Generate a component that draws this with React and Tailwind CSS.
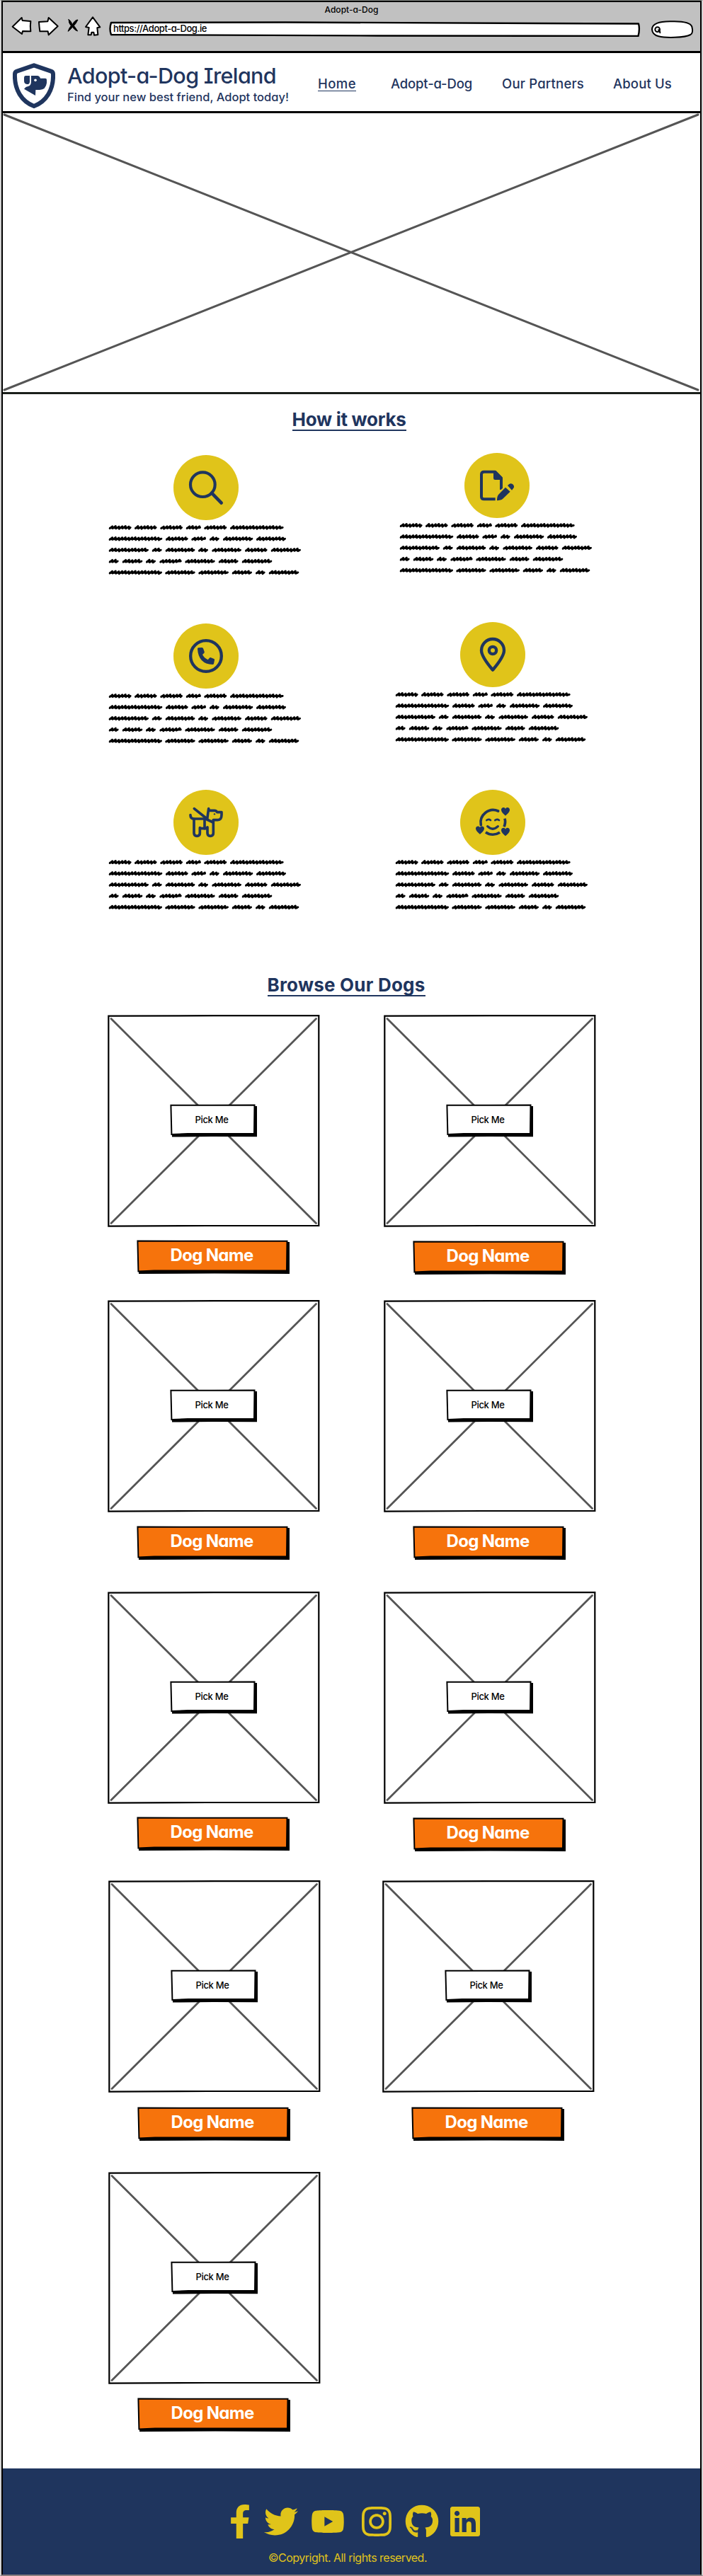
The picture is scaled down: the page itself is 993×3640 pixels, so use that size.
import { useLayoutEffect, useRef } from "react";
import { FaFacebookF, FaTwitter, FaYoutube, FaInstagram, FaGithub, FaLinkedin } from "react-icons/fa";

// Spreads the letters of a label so that it fills the given width.
function Label({ width, className, children }) {
  const ref = useRef(null);
  useLayoutEffect(() => {
    const el = ref.current;
    const fit = () => {
      el.style.letterSpacing = "0px";
      const natural = el.getBoundingClientRect().width;
      el.style.letterSpacing = (width - natural) / el.textContent.length + "px";
    };
    fit();
    document.fonts?.ready.then(fit);
  }, [width]);
  return (
    <span ref={ref} className={"inline-block whitespace-nowrap " + className}>
      {children}
    </span>
  );
}

function ChromeIcons() {
  return (
    <svg className="h-[30px] w-[128px]" viewBox="45 66 384 90" fill="#fff" stroke="#000" strokeWidth="6" strokeLinejoin="round" strokeLinecap="round">
      <path d="M50 113 L89 75 L92 87 L127 90 Q124 112 127 133 L93 132 L90 144 Z" />
      <path d="M162 93 L199 91 L203 75 L242 111 L203 148 L200 133 L166 133 Q163 112 162 93 Z" />
      <path d="M288 83 C296 86 301 98 304 104 C310 92 318 84 327 84 Q317 103 310 109 Q318 119 326 132 Q316 131 304 115 Q294 128 285 133 Q290 119 298 109 Q288 99 288 83 Z" fill="#000" strokeWidth="3" />
      <path d="M390 73 L421 115 L409 118 L412 147 L396 149 L394 137 L385 137 L383 148 L370 148 L374 117 L360 114 Z" />
    </svg>
  );
}

function BrowserBar() {
  return (
    <div className="flex h-[72px] flex-col border-b-[3px] border-black bg-[#c1c1c1]">
      <div className="flex h-[19px] justify-center">
        <Label width={76} className="text-xs font-medium leading-[22px]">Adopt-a-Dog</Label>
      </div>
      <div className="flex pl-3">
        <ChromeIcons />
        <div className="ml-[9px] mt-[8px] grid h-[22px] w-[753px] items-center">
          <svg className="col-start-1 row-start-1 h-[22px] w-[753px]" viewBox="0 0 753 22" fill="#fff" stroke="#000" strokeWidth="2.4" strokeLinejoin="round">
            <path d="M4 2 L250 1.5 L749 3.5 Q751 11 748.5 21 L380 20.5 L4 19 Q1 11 4 2 Z" />
          </svg>
          <div className="col-start-1 row-start-1 flex pb-0.5 pl-[7px]">
            <Label width={132} className="text-[13px] font-medium leading-5">https://Adopt-a-Dog.ie</Label>
          </div>
        </div>
        <svg className="ml-[12px] mt-[5px] h-[28px] w-[64px]" viewBox="1275 80 192 84" fill="#fff" stroke="#000" strokeWidth="6" strokeLinecap="round">
          <path d="M1284 124 C1284 98 1314 91 1360 90 C1410 88 1446 92 1453 112 Q1460 138 1447 146 C1420 160 1340 160 1312 153 Q1285 146 1284 124 Z" />
          <circle cx="1307" cy="124" r="10" />
          <path d="M1311 126 Q1318 129 1318 138" />
        </svg>
      </div>
    </div>
  );
}

function Logo() {
  return (
    <svg className="h-16 w-[60px]" viewBox="54 267 180 192" fill="#1f355e">
      <path
        d="M144 277 L216 302 Q225 305 225 314 C228 380 196 430 144 450 C92 430 60 380 63 314 Q63 305 72 302 Z"
        fill="none" stroke="#1f355e" strokeWidth="18" strokeLinejoin="round"
      />
      <path d="M108 321 H126 V347 Q125 358 114 357 Q102 356 102 343 V329 Q102 321 108 321 Z" />
      <path d="M132 321 H158 Q167 321 171 332 H192 Q198 332 198 339 V352 Q194 381 168 381 H151 L150 405 L102 377 Q109 367 119 366 Q132 363 132 345 Z" />
      <circle cx="150" cy="340" r="5.5" fill="#fff" />
    </svg>
  );
}

function Header() {
  return (
    <header className="flex h-[82px] text-[#1f355e]">
      <div className="pl-[14px] pt-[14px]">
        <Logo />
      </div>
      <div className="flex w-[352px] flex-col items-start pl-[17px] pt-[13px]">
        <Label width={295} className="h-[38px] text-[30.5px] font-medium leading-[38px]">Adopt-a-Dog Ireland</Label>
        <Label width={313} className="h-[22px] text-[16.5px] font-medium leading-[22px]">Find your new best friend, Adopt today!</Label>
      </div>
      <nav className="flex pl-[19px] pt-[29px] text-[18.5px] font-medium leading-7">
        <a className="flex h-[25px] w-[54px] border-b border-[#1f355e]"><Label width={54} className="">Home</Label></a>
        <a className="ml-[49px]"><Label width={115} className="">Adopt-a-Dog</Label></a>
        <a className="ml-[42px]"><Label width={116} className="">Our Partners</Label></a>
        <a className="ml-[41px]"><Label width={83} className="">About Us</Label></a>
      </nav>
    </header>
  );
}

function Hero() {
  return (
    <svg className="h-[400px] w-full" viewBox="0 0 985 400" fill="none">
      <path d="M0 1.5 H985" stroke="#000" strokeWidth="3" />
      <path d="M0 398.5 H985" stroke="#1b1f1b" strokeWidth="3" />
      <path d="M2 5 L982 394 M982 5 L2 394" stroke="#555" strokeWidth="3" strokeLinecap="round" />
    </svg>
  );
}

const scribble = [
  [[70, 166], [179, 274], [288, 383], [397, 461], [474, 570], [584, 811]],
  [[70, 297], [311, 406], [420, 482], [497, 538], [554, 681], [695, 821]],
  [[70, 239], [253, 295], [310, 435], [449, 491], [507, 632], [647, 742], [757, 884]],
  [[70, 112], [127, 213], [227, 269], [285, 379], [393, 520], [535, 619], [634, 762]],
  [[70, 296], [309, 436], [450, 578], [592, 677], [692, 733], [748, 876]],
];

// One scrawled word: a slanted zigzag between two x positions.
function word(a, b, y) {
  let d = `M${a + 4} ${y + 4}`;
  let i = 0;
  for (let x = a + 12; x < b - 5; x += 7) {
    const up = i % 2 === 0;
    const reach = 4 + ((i * 5 + a) % 3);
    d += ` L${x + (up ? 3 : -3)} ${up ? y - reach : y + reach}`;
    i++;
  }
  return d + ` L${b - 4} ${y}`;
}

function Scribble() {
  return (
    <svg className="h-20 w-[274px]" viewBox="68 0 822 240" fill="none" stroke="#000" strokeLinejoin="round" strokeLinecap="round">
      {scribble.map((line, row) =>
        line.map(([a, b]) => {
          const y = 31 + row * 47.6;
          return (
            <g key={a}>
              <path d={word(a, b, y)} strokeWidth="8" />
              <path d={`M${a + 5} ${y + 2} L${b - 6} ${y + 1}`} strokeWidth="8" />
            </g>
          );
        })
      )}
    </svg>
  );
}

const heart = "c-4 -4 -19 -15 -18 -26 c1 -10 14 -12 18 -3 c4 -9 17 -7 18 3 c1 11 -14 22 -18 26 z";

const drawings = {
  search: (
    <>
      <circle cx="124" cy="125" r="52" strokeWidth="12.5" />
      <path d="M162 161 L203 203" strokeWidth="14" />
    </>
  ),
  form: (
    <>
      <path d="M131 196 H83 Q72 196 72 185 V91 Q72 80 83 80 H130 L156 106 V156" strokeWidth="12" strokeLinecap="butt" />
      <path d="M123 76 H132 L160 104 V114 H130 Q123 114 123 107 Z" fill="#1f355e" stroke="none" />
      <path d="M149 162 L165 146 V160 L145 180 L131 196 Z" fill="#e0c41a" stroke="none" />
      <path d="M174 146 L194 164 L162 195 Q155 201 138 202 Q138 184 144 177 Z" fill="#1f355e" stroke="none" />
      <path d="M183 138 L189 133 Q196 127 204 132 Q213 140 209 148 L201 158 Z" fill="#1f355e" stroke="none" />
    </>
  ),
  phone: (
    <>
      <circle cx="138" cy="138" r="65.5" strokeWidth="13" />
      <path d="M102 107 Q102 104 106 103 L120 102 Q124 102 126 106 L131 119 Q132 123 130 125 L123 132 Q130 146 146 154 L152 147 Q155 143 159 145 L172 150 Q175 152 174 155 L171 170 Q170 174 166 174 Q106 172 102 107 Z" fill="#1f355e" stroke="none" />
    </>
  ),
  pin: (
    <>
      <path d="M138 72 A48 48 0 0 0 90 120 C90 147 122 184 138 203 C154 184 186 147 186 120 A48 48 0 0 0 138 72 Z" strokeWidth="13" />
      <circle cx="138" cy="120" r="15.5" strokeWidth="13" />
    </>
  ),
  dog: (
    <g strokeWidth="11">
      <path d="M88 80 L142 123" />
      <path d="M72 107 Q72 123 88 123 H140" />
      <path d="M87 124 V184 Q88 196 99.5 196 Q112 196 112 184 V161 L118 164 H138 L144 159 V184 Q145 196 156 196 Q169 196 169 184 V130" />
      <path d="M132 124 V164 M142 126 L168 138" />
      <path d="M143 124 L149 80 L151 88 H174 Q181 88 185 95 H204 V106 Q204 128 188 128 H169" />
      <circle cx="174" cy="103" r="3.5" fill="#1f355e" stroke="none" />
    </g>
  ),
  love: (
    <>
      <path d="M161 90 A53 53 0 0 0 88 149" strokeWidth="11" />
      <path d="M108 180 A53 53 0 0 0 168 181 M189 122 A53 53 0 0 1 186 157" strokeWidth="11" strokeLinecap="butt" />
      <path d="M112 129 Q120 122 129 129 M148 129 Q156 122 165 129" strokeWidth="8" />
      <path d="M116 155 Q138 176 160 155" strokeWidth="10" />
      <path d={"M192 110 " + heart + " M84 189 " + heart + " M192 196 " + heart} fill="#1f355e" stroke="none" />
    </>
  ),
};

function Feature({ icon, className }) {
  return (
    <div className={"flex flex-col " + className}>
      <div className="ml-[92px] size-[92px] rounded-full bg-[#e0c41a]">
        <svg className="size-[92px]" viewBox="0 0 276 276" fill="none" stroke="#1f355e" strokeLinejoin="round" strokeLinecap="round">
          {drawings[icon]}
        </svg>
      </div>
      <Scribble />
    </div>
  );
}

function HowItWorks() {
  return (
    <section className="h-[826px]">
      <div className="flex h-[86px] justify-center pr-[7px] pt-[20px]">
        <h2 className="flex h-[32px] border-b-2 border-[#1f355e] font-bold text-[#1f355e]">
          <Label width={161} className="text-[26px] leading-8">How it works</Label>
        </h2>
      </div>
      <div className="flex pl-[149px]">
        <div className="flex w-[405px] flex-col">
          <Feature icon="search" className="" />
          <Feature icon="phone" className="mt-[66px]" />
          <Feature icon="dog" className="mt-[63px]" />
        </div>
        <div className="-mt-[3px] flex flex-col">
          <Feature icon="form" className="pl-[6px]" />
          <Feature icon="pin" className="mt-[67px]" />
          <Feature icon="love" className="mt-[65px]" />
        </div>
      </div>
    </section>
  );
}

function DogCard({ className, gap = "mt-[19px]" }) {
  return (
    <div className={"flex h-[368px] w-[300px] flex-col " + className}>
      <div className="grid h-[300px] w-[300px]">
        <svg className="col-start-1 row-start-1 size-[300px]" viewBox="0 0 300 300" fill="none">
          <path d="M1.3 1.7 L150 1.2 L298.3 1 V298 L140 298 L1.3 298.7 Z" stroke="#000" strokeWidth="2.2" />
          <path d="M5 5.5 L294.5 294.5 M294.5 5.5 L5 294.5" stroke="#555" strokeWidth="2.8" strokeLinecap="round" />
        </svg>
        <button className="col-start-1 row-start-1 ml-[88px] mt-[126px] grid h-[47px] w-[124px]">
          <svg className="col-start-1 row-start-1 h-[47px] w-[124px]" viewBox="0 0 124 47">
            <path d="M3 3 H123 V46.3 L60 46 L3 46.5 Z" />
            <path d="M1.4 1.7 L60 1.8 L119.5 1.5 L119 42 L25 42 L2.4 43 Z" fill="#fff" stroke="#000" strokeWidth="2" />
          </svg>
          <span className="col-start-1 row-start-1 flex items-start pl-[36px] pt-[12px]">
            <Label width={47} className="text-[13px] font-medium leading-5">Pick Me</Label>
          </span>
        </button>
      </div>
      <div className={"ml-[41px] grid h-[49px] w-[217px] " + gap}>
        <svg className="col-start-1 row-start-1 h-[49px] w-[217px]" viewBox="0 0 217 49">
          <path d="M3 3 H216 V48 L110 47.5 L3 48 Z" />
          <path d="M1.4 1.4 L100 1.8 L212.5 1.8 L212 43.5 L25 43.5 L2.4 44.5 Z" fill="#f6730c" stroke="#000" strokeWidth="2" />
        </svg>
        <span className="col-start-1 row-start-1 flex items-start pl-[48px] pt-[6px] font-bold text-white">
          <Label width={117} className="text-[24px] leading-8">Dog Name</Label>
        </span>
      </div>
    </div>
  );
}

function BrowseDogs() {
  return (
    <section className="h-[2105px]">
      <div className="flex h-[51px] justify-center pr-[15px]">
        <h2 className="flex h-[25px] border-b-2 border-[#1f355e] font-bold text-[#1f355e]">
          <Label width={223} className="-mt-[7px] h-8 text-[26px] leading-8">Browse Our Dogs</Label>
        </h2>
      </div>
      <div className="grid grid-cols-[390px_300px] pl-[147.5px]">
        <DogCard className="mb-[35px]" gap="mt-[18px]" />
        <DogCard className="" />
        <DogCard className="mb-[44px]" />
        <DogCard className="" />
        <DogCard className="mb-[40px]" gap="mt-[18px]" />
        <DogCard className="" />
        <DogCard className="ml-[1px] mb-[44px]" gap="mt-[20px]" />
        <DogCard className="-ml-[2px]" gap="mt-[20px]" />
        <DogCard className="ml-[1px]" />
      </div>
    </section>
  );
}

function Footer() {
  return (
    <footer className="h-[150px] bg-[#1f355e] text-[#e0c41a]">
      <div className="flex pl-[311px] pt-[51px]">
        <FaFacebookF className="size-12" />
        <FaTwitter className="ml-[9.5px] size-12" />
        <FaYoutube className="ml-[18.5px] size-12" />
        <FaInstagram className="ml-[21px] size-12" />
        <FaGithub className="ml-[16px] size-12" />
        <FaLinkedin className="ml-[13px] size-12" />
      </div>
      <div className="flex pl-[375px] pt-[15px]">
        <Label width={224} className="text-base leading-6">©Copyright. All rights reserved.</Label>
      </div>
    </footer>
  );
}

export default function App() {
  return (
    <div className="flex h-[3640px] w-[993px] flex-col border-x-2 border-b-2 border-t border-x-[#d4d4d4] border-b-[#8b7f7f] border-t-[#8a8f8a] bg-white font-['Inter',sans-serif] text-black [font-feature-settings:'cv11','cv08']">
      <div className="flex flex-col border-x-2 border-t-2 border-black">
        <BrowserBar />
        <Header />
        <Hero />
        <HowItWorks />
        <BrowseDogs />
        <Footer />
      </div>
    </div>
  );
}
